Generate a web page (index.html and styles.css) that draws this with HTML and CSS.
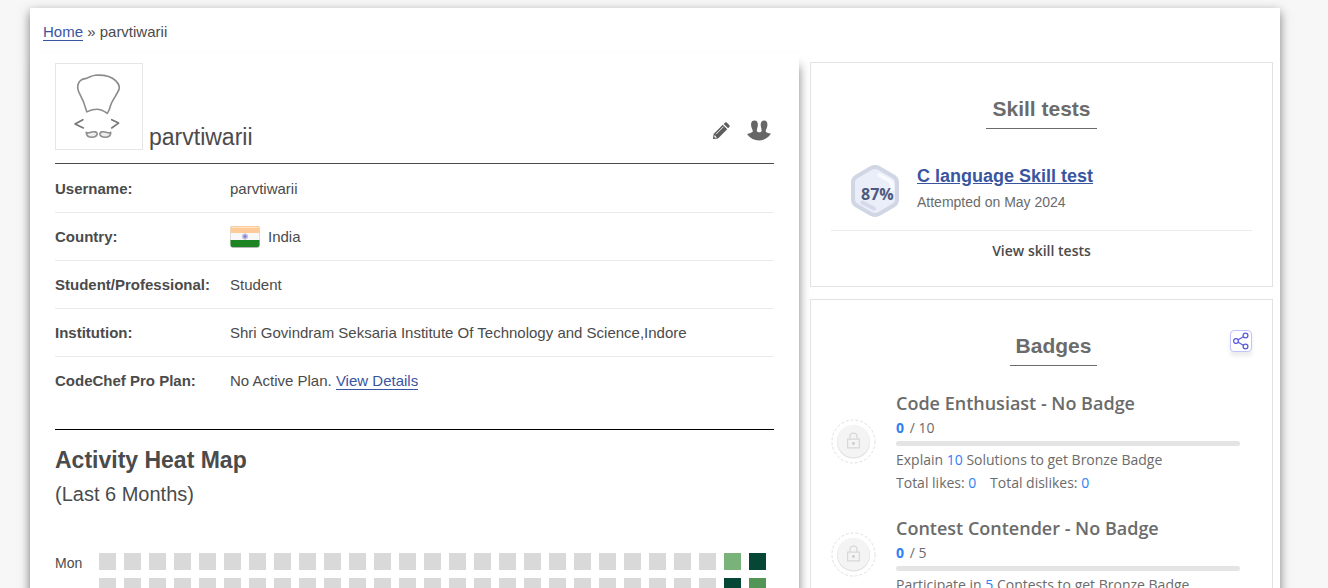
FILE: index.html
```html
<!DOCTYPE html>
<html lang="en">
<head>
    <meta charset="UTF-8">
    <meta name="viewport" content="width=device-width, initial-scale=1.0">
    <title>parvtiwarii | CodeChef</title>
    <link rel="stylesheet" href="styles.css">
</head>
<body>
    <div class="page">
        <nav class="breadcrumb">
            <a href="#">Home</a> » parvtiwarii
        </nav>

        <div class="columns">
            <main class="profile">
                <!-- user header -->
                <header class="user-header">
                    <svg class="avatar" viewBox="0 0 88 87" fill="none" stroke="#8c8c8c" stroke-width="1.700" stroke-linecap="round" stroke-linejoin="round">
                        <path d="M31.500 49C29.500 41 27 35 23.500 29C20.500 22 23 16 30 15C34 14.500 35 12 40 11.500C49 11 57 13 61 17C64 20 65.500 23 64.500 26C62 32 57.500 37 56 42C55 46 54.500 48 52.500 50.500C46 45.500 38 45.500 31.500 49Z"/>
                        <path d="M27.500 57L19.500 61.500L28 65.500M57 57L64 60.500L57 65.500" stroke="#777"/>
                        <path d="M31 70C33 72 36 68.500 40 69.500C44 70.500 42 74.500 37 75C33 75 31 73 31 70ZM56 70C54 72 51 68.500 47 69.500C43 70.500 45 74.500 50 75C54 75 56 73 56 70Z" stroke="#8f8f8f" fill="#eee"/>
                    </svg>
                    <h1 class="user-name">parvtiwarii</h1>
                    <a class="user-tool" href="#" aria-label="Edit profile">
                        <svg width="18" height="20" viewBox="0 0 20 20">
                            <path fill="#5d5d5d" d="M1 19L1.800 13.300L12 3.100L16.900 8L6.700 18.200ZM13 2.100L14.700 0.500Q15.500 0 16.300 0.600L19.400 3.700Q20 4.500 19.500 5.300L17.900 7Z"/>
                            <path fill="none" stroke="#fff" d="M4.500 13.500L12.800 5.200"/>
                            <path fill="#fff" d="M2.800 14.500L5.500 17.200L3.500 17.500L2.500 16.500Z"/>
                        </svg>
                    </a>
                    <a class="user-tool" href="#" aria-label="Teams">
                        <svg width="26" height="21" viewBox="0 0 26 22">
                            <path fill="#666" d="M.5 15C3 13.500 6.500 13.500 6.500 11.500C6.500 10 5 8.500 4.700 5.500C4.500 2.500 5.500 .5 8.300 .5C11 .5 12 2.500 11.800 5.500C11.500 8.500 10.500 9.500 10.800 11.500C11.200 13.200 15.300 13.200 15.700 11.500C16 9.500 15 8.500 14.800 5.500C14.600 2.500 15.800 .5 18.400 .5C21 .5 22 2.500 21.800 5.500C21.600 8.500 20 10 20 11.500C20 13.500 23.200 13.500 25.500 14.500C22 19.500 17.500 21.500 13 21.500C8 21.500 4 19.500 .5 15Z"/>
                        </svg>
                    </a>
                </header>

                <!-- user details -->
                <ul class="user-details">
                    <li><strong>Username:</strong><span>parvtiwarii</span></li>
                    <li>
                        <strong>Country:</strong>
                        <svg class="flag" viewBox="0 0 30 24">
                            <rect x="1" y="3" width="28" height="20" rx="2" fill="#999" opacity=".7"/>
                            <rect x="0" y="1" width="30" height="21" rx="2" fill="#ddd"/>
                            <path fill="#fecb98" d="M2 1H28Q29.500 1 29.500 3V8H.5V3Q.5 1 2 1Z"/>
                            <rect x="1" y="8" width="28" height="7" fill="#f8f8f8"/>
                            <path fill="#1d8424" d="M.5 15H29.500V20Q29.500 22 28 22H2Q.5 22 .5 20Z"/>
                            <path stroke="#fff" stroke-opacity=".5" fill="none" d="M2 2.500H28"/>
                            <circle cx="15" cy="11.500" r="2.700" fill="#a9a9dc" stroke="#c8c8ea"/>
                            <circle cx="15" cy="11.500" r="1" fill="#7474bd"/>
                        </svg>
                        <span>India</span>
                    </li>
                    <li><strong>Student/Professional:</strong><span>Student</span></li>
                    <li><strong>Institution:</strong><span>Shri Govindram Seksaria Institute Of Technology and Science,Indore</span></li>
                    <li><strong>CodeChef Pro Plan:</strong><span>No Active Plan. <a href="#">View Details</a></span></li>
                </ul>

                <!-- heat map -->
                <section class="activity">
                    <h2>Activity Heat Map</h2>
                    <p class="period">(Last 6 Months)</p>
                    <div class="heatmap">
                        <span class="day">Mon</span>
                        <i></i><i></i><i></i><i></i><i></i><i></i><i></i><i></i><i></i>
                        <i></i><i></i><i></i><i></i><i></i><i></i><i></i><i></i><i></i>
                        <i></i><i></i><i></i><i></i><i></i><i></i><i></i><i class="lv1"></i><i class="lv3"></i>
                        <span class="day"></span>
                        <i></i><i></i><i></i><i></i><i></i><i></i><i></i><i></i><i></i>
                        <i></i><i></i><i></i><i></i><i></i><i></i><i></i><i></i><i></i>
                        <i></i><i></i><i></i><i></i><i></i><i></i><i></i><i class="lv3"></i><i class="lv2"></i>
                    </div>
                </section>
            </main>

            <aside class="side">
                <section class="card skill">
                    <h2 class="card-title">Skill tests</h2>
                    <div class="skill-item">
                        <div class="score">
                            <svg viewBox="0 0 48 52">
                                <path d="M20 3Q24 1 28 3L42.500 11.500Q46 13.500 46 17.500V34.500Q46 38.500 42.500 40.500L28 49Q24 51 20 49L5.500 40.500Q2 38.500 2 34.500V17.500Q2 13.500 5.500 11.500Z" fill="#eaeef8" stroke="#d0d6e4" stroke-width="4"/>
                                <path d="M28.500 10L38 15.500Q41 17 41 21V24" fill="none" stroke="#f8faff" stroke-width="4" stroke-linecap="round"/>
                                <path d="M11.500 37.500L23 43.500" stroke="#d5daeb" stroke-width="4" stroke-linecap="round"/>
                            </svg>
                            <span>87%</span>
                        </div>
                        <div class="skill-info">
                            <a class="skill-name" href="#">C language Skill test</a>
                            <p>Attempted on May 2024</p>
                        </div>
                    </div>
                    <a class="view-all" href="#">View skill tests</a>
                </section>

                <section class="card badges">
                    <div class="card-head">
                        <h2 class="card-title">Badges</h2>
                        <button class="share" type="button" aria-label="Share badges">
                            <svg width="16" height="18" viewBox="0 0 16 18" fill="none" stroke="#5b5be0" stroke-width="1.300">
                                <circle cx="3" cy="9" r="2.400"/>
                                <circle cx="12.500" cy="3.500" r="2.400"/>
                                <circle cx="12.500" cy="14.500" r="2.400"/>
                                <path d="M5.200 7.800L10.300 4.800M5.200 10.200L10.300 13.200"/>
                            </svg>
                        </button>
                    </div>
                    <div class="badge">
                        <svg class="lock" viewBox="0 0 46 46">
                            <circle cx="23" cy="23" r="22" fill="none" stroke="#dedede" stroke-dasharray="3 2"/>
                            <circle cx="23" cy="23.500" r="17" fill="#e2e2e2"/>
                            <circle cx="23" cy="22.500" r="16.500" fill="#f4f4f4"/>
                            <path d="M17 20.500H29V29.500H17ZM19.500 20V17.500Q19.500 14.500 23 14.500Q26.500 14.500 26.500 17.500V20" fill="none" stroke="#d8d8d8" stroke-width="1.300"/>
                            <circle cx="23" cy="25" r="1.500" fill="#ccc"/>
                        </svg>
                        <div class="badge-info">
                            <h3>Code Enthusiast - No Badge</h3>
                            <p class="count"><b>0</b> / 10</p>
                            <div class="bar"></div>
                            <p>Explain <em>10</em> Solutions to get Bronze Badge</p>
                            <p><span class="likes">Total likes: <em>0</em></span> Total dislikes: <em>0</em></p>
                        </div>
                    </div>
                    <div class="badge">
                        <svg class="lock" viewBox="0 0 46 46">
                            <circle cx="23" cy="23" r="22" fill="none" stroke="#dedede" stroke-dasharray="3 2"/>
                            <circle cx="23" cy="23.500" r="17" fill="#e2e2e2"/>
                            <circle cx="23" cy="22.500" r="16.500" fill="#f4f4f4"/>
                            <path d="M17 20.500H29V29.500H17ZM19.500 20V17.500Q19.500 14.500 23 14.500Q26.500 14.500 26.500 17.500V20" fill="none" stroke="#d8d8d8" stroke-width="1.300"/>
                            <circle cx="23" cy="25" r="1.500" fill="#ccc"/>
                        </svg>
                        <div class="badge-info">
                            <h3>Contest Contender - No Badge</h3>
                            <p class="count"><b>0</b> / 5</p>
                            <div class="bar"></div>
                            <p>Participate in <em>5</em> Contests to get Bronze Badge</p>
                        </div>
                    </div>
                </section>
            </aside>
        </div>
    </div>
</body>
</html>
```
FILE: styles.css
```css
* {
    box-sizing: border-box;
}

body {
    height: 100vh;
    margin: 0;
    padding: 8px 48px 0 30px;
    overflow: hidden;
    background: #f7f7f7;
    color: #4b4b4b;
    font-family: "Liberation Sans", Arial, sans-serif;
    font-size: 15px;
}

h1, h2, h3, p, ul {
    margin: 0;
    padding: 0;
}

a {
    color: #3a559f;
    text-decoration: none;
}

/* page */
.page {
    display: flex;
    flex-direction: column;
    min-height: 100vh;
    background: #fff;
    box-shadow: 0 4px 10px rgba(0, 0, 0, .5);
}

.breadcrumb {
    height: 46px;
    padding: 0 13px;
    line-height: 48px;
}

.breadcrumb a,
.user-details a {
    border-bottom: 1px solid #3a559f;
}

.columns {
    display: flex;
    flex: 1;
}

/* left column */
.profile {
    flex: 1;
    min-width: 0;
    padding: 9px 25px 0;
    background: #fff;
    box-shadow: 4px 8px 10px -4px rgba(0, 0, 0, .5);
}

.user-header {
    display: flex;
    align-items: flex-end;
    height: 101px;
    padding-bottom: 13px;
    border-bottom: 1px solid #4b4b4b;
}

.avatar {
    width: 88px;
    height: 87px;
    border: 1px solid #e6e6e6;
}

.user-name {
    flex: 1;
    margin-left: 6px;
    font-size: 23px;
    font-weight: normal;
    line-height: 26px;
}

.user-tool {
    display: flex;
    margin: 0 2px 9px 14px;
}

.user-details {
    padding-top: 1px;
    list-style: none;
}

.user-details li {
    display: flex;
    align-items: center;
    height: 48px;
    border-bottom: 1px solid #ebebeb;
}

.user-details li:last-child {
    border-color: transparent;
}

.user-details strong {
    width: 175px;
}

.flag {
    width: 30px;
    height: 24px;
    margin-right: 8px;
}

.activity {
    margin-top: 24px;
    padding-top: 14px;
    border-top: 1px solid #000;
}

.activity h2 {
    font-size: 23px;
    line-height: 32px;
}

.period {
    font-size: 20px;
    line-height: 36px;
}

.heatmap {
    display: grid;
    grid-template-columns: 36px repeat(27, 17px);
    grid-auto-rows: 17px;
    gap: 8px;
    margin-top: 41px;
}

.heatmap i {
    background: #d9d9d9;
}

.heatmap .lv1 {
    background: #7ab37a;
}

.heatmap .lv2 {
    background: #519657;
}

.heatmap .lv3 {
    background: #064635;
}

.day {
    font-size: 14px;
    line-height: 20px;
}

/* right column */
.side {
    width: 463px;
    margin: 8px 7px 0 11px;
}

.card {
    margin-bottom: 12px;
    padding: 28px 20px 21px;
    border: 1px solid #e2e2e2;
    background: #fff;
    color: #6b6b6b;
}

.card-title {
    width: fit-content;
    margin: 0 auto;
    padding: 0 6px 2px;
    border-bottom: 1px solid #6b6b6b;
    font-family: "Liberation Sans", Arial, sans-serif;
    font-size: 21px;
    line-height: 35px;
}

/* skill tests */
.skill-item {
    display: flex;
    align-items: center;
    gap: 18px;
    height: 102px;
    padding: 22px 20px 0;
    border-bottom: 1px solid #ebebeb;
}

.score {
    position: relative;
    width: 48px;
    height: 52px;
}

.score svg {
    width: 48px;
    height: 52px;
}

/* percentage over the hexagon */
.score span {
    position: absolute;
    top: 17px;
    left: 10px;
    color: #4e597f;
    font: bold 16px/24px "Open Sans", sans-serif;
}

.skill-info {
    padding-bottom: 6px;
}

.skill-name {
    font-size: 18px;
    font-weight: bold;
    line-height: 28px;
    text-decoration: underline;
}

.skill-item p {
    font-size: 14px;
    line-height: 24px;
}

.view-all {
    display: block;
    padding: 8px 0 2px;
    color: #4b4b4b;
    font: 600 14px/24px "Open Sans", sans-serif;
    text-align: center;
}

/* badges */
.badges {
    font-family: "Open Sans", sans-serif;
    font-size: 14px;
}

.card-head {
    display: flex;
    align-items: flex-start;
    margin-bottom: 22px;
    padding-left: 46px;
}

.share {
    display: flex;
    align-items: center;
    justify-content: center;
    width: 22px;
    height: 22px;
    margin-top: 2px;
    padding: 0;
    border: 1px solid #c3c3fb;
    border-radius: 4px;
    background: #fff;
    box-shadow: 0 4px 4px rgba(0, 0, 0, .08);
}

.badge {
    display: flex;
    align-items: center;
    gap: 20px;
    margin-bottom: 19px;
    padding-right: 12px;
}

.lock {
    width: 45px;
    height: 45px;
}

.badge-info {
    flex: 1;
    line-height: 23px;
}

.badge h3 {
    font-size: 18px;
    font-weight: 600;
    line-height: 30px;
}

.badge b,
.badge em {
    color: #2f80f5;
    font-style: normal;
}

.badge .count {
    line-height: 20px;
}

.count b {
    margin-right: 2px;
}

.bar {
    height: 5px;
    margin: 3px 0 2px;
    border-radius: 3px;
    background: #e4e4e4;
}

.likes {
    margin-right: 10px;
}
```
